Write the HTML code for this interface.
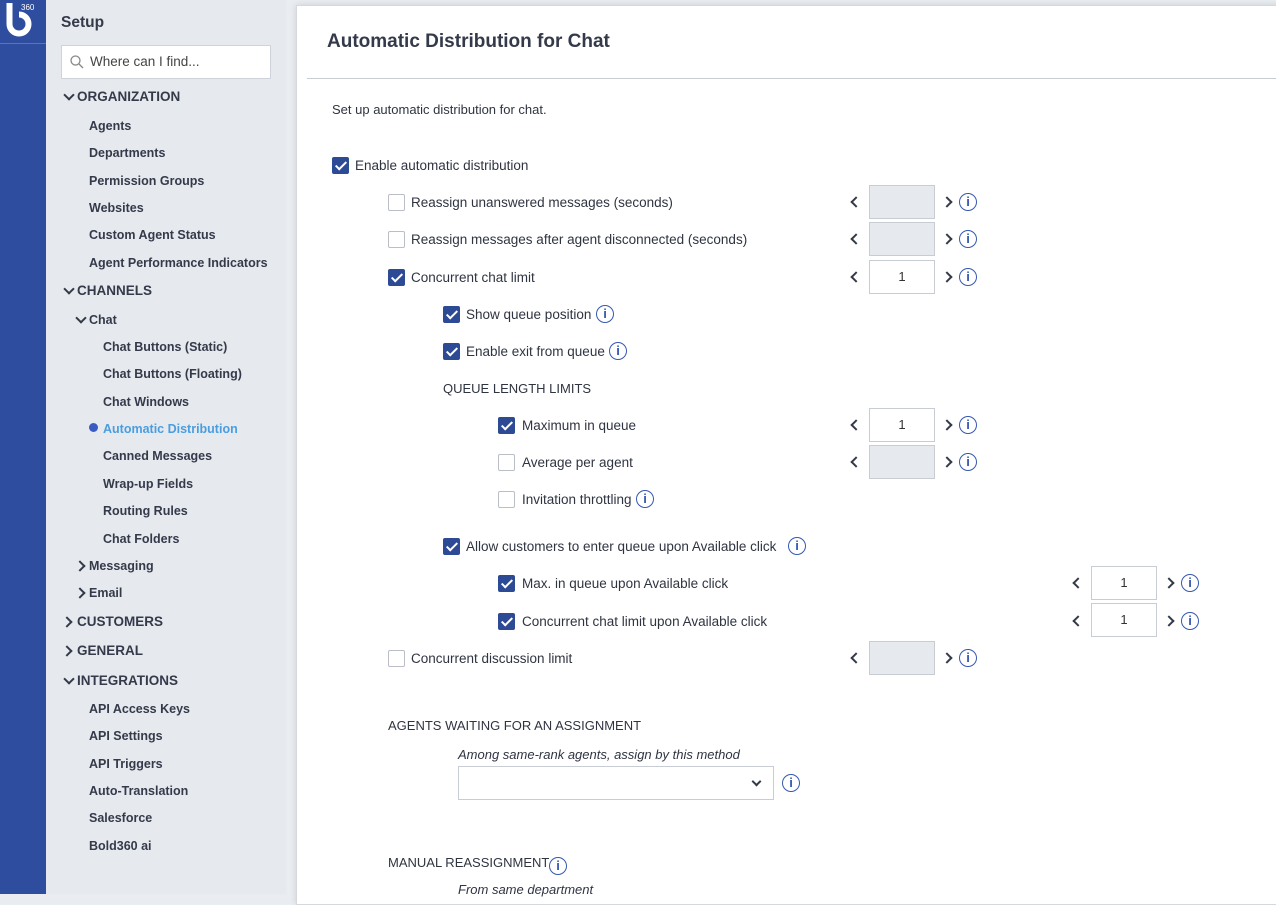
<!DOCTYPE html>
<html><head><meta charset="utf-8"><style>
*{box-sizing:border-box;margin:0;padding:0}
body{width:1276px;height:894px;overflow:hidden;background:#e9ecf0;font-family:"Liberation Sans",sans-serif;color:#333a48;position:relative}
.a{position:absolute;white-space:nowrap}
#rail{left:0;top:0;width:46px;height:894px;background:#2f4d9e}
#nav{left:46px;top:0;width:240px;height:894px;background:#e6e9ee}
.n{position:absolute;font-size:12.5px;font-weight:bold;color:#343a4a;white-space:nowrap;line-height:16px;margin-top:1px}
.h{font-size:13.5px}
#main{left:296px;top:5px;width:990px;height:900px;background:#fff;border:1px solid #d5d8dd;box-shadow:0 0 6px rgba(0,0,0,.12)}
.t{position:absolute;font-size:13.5px;color:#2f3441;white-space:nowrap;line-height:16px;margin-top:1px}
.cb{position:absolute;width:17px;height:17px;border:1px solid #b9bec7;border-radius:2px;background:#fff}
.cb.on{background:#2d4a94;border-color:#2d4a94}
.cb.on::after{content:"";position:absolute;left:5px;top:1px;width:4px;height:9px;border:solid #fff;border-width:0 2px 2px 0;transform:rotate(45deg)}
.i{position:absolute;width:18px;height:18px;border:1.6px solid #3558b0;border-radius:50%;color:#3558b0;font:bold 13px "Liberation Sans",sans-serif;text-align:center;line-height:15px}
.box{position:absolute;width:66px;height:34px;border:1px solid #c8ccd3;background:#e6e9ee;font-size:13px;text-align:center;line-height:32px;color:#333}
.box.w{background:#fff}
.ch{position:absolute;width:8px;height:8px;border:solid #333a48;border-width:2px 2px 0 0}
</style></head><body>
<div id="rail" class="a">
<svg class="a" style="left:0;top:0" width="46" height="46"><path d="M9.5 3 V24 A9.5 9.5 0 1 0 19 14.5 " fill="none" stroke="#fff" stroke-width="6"/><text x="21" y="10" fill="#fff" font-size="8" font-family="Liberation Sans">360</text></svg>
<div class="a" style="left:0;top:43px;width:46px;height:1px;background:#5a74b8"></div>
</div>
<div id="nav" class="a">
<div class="a" style="left:15px;top:14px;font-size:15.5px;font-weight:bold;color:#343a4a">Setup</div>
<div class="a" style="left:15px;top:45px;width:210px;height:34px;background:#fff;border:1px solid #cfd3d9"><svg class="a" style="left:8px;top:9px" width="14" height="14"><circle cx="5.5" cy="5.5" r="4.5" fill="none" stroke="#888" stroke-width="1.3"/><path d="M9 9 L13 13" stroke="#888" stroke-width="1.3"/></svg><span class="a" style="left:28px;top:8px;font-size:13.5px;color:#444">Where can I find...</span></div>
</div>
<div class="n h" style="left:77px;top:88px">ORGANIZATION</div>
<div class="n" style="left:89px;top:117px">Agents</div>
<div class="n" style="left:89px;top:144px">Departments</div>
<div class="n" style="left:89px;top:172px">Permission Groups</div>
<div class="n" style="left:89px;top:199px">Websites</div>
<div class="n" style="left:89px;top:226px">Custom Agent Status</div>
<div class="n" style="left:89px;top:254px">Agent Performance Indicators</div>
<div class="n h" style="left:77px;top:282px">CHANNELS</div>
<div class="n" style="left:89px;top:311px">Chat</div>
<div class="n" style="left:103px;top:338px">Chat Buttons (Static)</div>
<div class="n" style="left:103px;top:365px">Chat Buttons (Floating)</div>
<div class="n" style="left:103px;top:393px">Chat Windows</div>
<div class="a" style="left:89px;top:423px;width:9px;height:9px;border-radius:50%;background:#3a5cc2"></div>
<div class="n" style="left:103px;top:420px;color:#4a9ee0">Automatic Distribution</div>
<div class="n" style="left:103px;top:447px">Canned Messages</div>
<div class="n" style="left:103px;top:475px">Wrap-up Fields</div>
<div class="n" style="left:103px;top:502px">Routing Rules</div>
<div class="n" style="left:103px;top:530px">Chat Folders</div>
<div class="n" style="left:89px;top:557px">Messaging</div>
<div class="n" style="left:89px;top:584px">Email</div>
<div class="n h" style="left:77px;top:613px">CUSTOMERS</div>
<div class="n h" style="left:77px;top:642px">GENERAL</div>
<div class="n h" style="left:77px;top:672px">INTEGRATIONS</div>
<div class="n" style="left:89px;top:700px">API Access Keys</div>
<div class="n" style="left:89px;top:727px">API Settings</div>
<div class="n" style="left:89px;top:755px">API Triggers</div>
<div class="n" style="left:89px;top:782px">Auto-Translation</div>
<div class="n" style="left:89px;top:809px">Salesforce</div>
<div class="n" style="left:89px;top:837px">Bold360 ai</div>
<div class="ch" style="left:65px;top:91px;transform:rotate(135deg)"></div>
<div class="ch" style="left:65px;top:285px;transform:rotate(135deg)"></div>
<div class="ch" style="left:77px;top:314px;transform:rotate(135deg)"></div>
<div class="ch" style="left:76px;top:562px;transform:rotate(45deg)"></div>
<div class="ch" style="left:76px;top:589px;transform:rotate(45deg)"></div>
<div class="ch" style="left:63px;top:618px;transform:rotate(45deg)"></div>
<div class="ch" style="left:63px;top:647px;transform:rotate(45deg)"></div>
<div class="ch" style="left:65px;top:675px;transform:rotate(135deg)"></div>

<div id="main" class="a"></div>
<div class="a" style="left:327px;top:31px;font-size:19px;font-weight:bold;color:#343a4a">Automatic Distribution for Chat</div>
<div class="a" style="left:307px;top:78px;width:969px;height:1px;background:#c9ccd1"></div>
<div class="t" style="left:332px;top:101px;font-size:13px">Set up automatic distribution for chat.</div>

<div class="cb on" style="left:332px;top:157px"></div><div class="t" style="left:355px;top:157px">Enable automatic distribution</div>

<div class="cb" style="left:388px;top:194px"></div><div class="t" style="left:411px;top:194px">Reassign unanswered messages (seconds)</div>
<div class="cb" style="left:388px;top:231px"></div><div class="t" style="left:411px;top:231px">Reassign messages after agent disconnected (seconds)</div>
<div class="cb on" style="left:388px;top:269px"></div><div class="t" style="left:411px;top:269px">Concurrent chat limit</div>
<div class="cb on" style="left:443px;top:306px"></div><div class="t" style="left:466px;top:306px">Show queue position</div><div class="i" style="left:596px;top:305px">i</div>
<div class="cb on" style="left:443px;top:343px"></div><div class="t" style="left:466px;top:343px">Enable exit from queue</div><div class="i" style="left:609px;top:342px">i</div>
<div class="t" style="left:443px;top:380px;font-size:13px">QUEUE LENGTH LIMITS</div>
<div class="cb on" style="left:498px;top:417px"></div><div class="t" style="left:522px;top:417px">Maximum in queue</div>
<div class="cb" style="left:498px;top:454px"></div><div class="t" style="left:522px;top:454px">Average per agent</div>
<div class="cb" style="left:498px;top:491px"></div><div class="t" style="left:522px;top:491px">Invitation throttling</div><div class="i" style="left:636px;top:490px">i</div>
<div class="cb on" style="left:443px;top:538px"></div><div class="t" style="left:466px;top:538px">Allow customers to enter queue upon Available click</div><div class="i" style="left:788px;top:537px">i</div>
<div class="cb on" style="left:498px;top:575px"></div><div class="t" style="left:522px;top:575px">Max. in queue upon Available click</div>
<div class="cb on" style="left:498px;top:613px"></div><div class="t" style="left:522px;top:613px">Concurrent chat limit upon Available click</div>
<div class="cb" style="left:388px;top:650px"></div><div class="t" style="left:411px;top:650px">Concurrent discussion limit</div>

<div class="ch" style="left:852px;top:198px;transform:rotate(-135deg)"></div><div class="box" style="left:869px;top:185px"></div><div class="ch" style="left:943px;top:198px;transform:rotate(45deg)"></div><div class="i" style="left:959px;top:193px">i</div>
<div class="ch" style="left:852px;top:235px;transform:rotate(-135deg)"></div><div class="box" style="left:869px;top:222px"></div><div class="ch" style="left:943px;top:235px;transform:rotate(45deg)"></div><div class="i" style="left:959px;top:230px">i</div>
<div class="ch" style="left:852px;top:273px;transform:rotate(-135deg)"></div><div class="box w" style="left:869px;top:260px">1</div><div class="ch" style="left:943px;top:273px;transform:rotate(45deg)"></div><div class="i" style="left:959px;top:268px">i</div>
<div class="ch" style="left:852px;top:421px;transform:rotate(-135deg)"></div><div class="box w" style="left:869px;top:408px">1</div><div class="ch" style="left:943px;top:421px;transform:rotate(45deg)"></div><div class="i" style="left:959px;top:416px">i</div>
<div class="ch" style="left:852px;top:458px;transform:rotate(-135deg)"></div><div class="box" style="left:869px;top:445px"></div><div class="ch" style="left:943px;top:458px;transform:rotate(45deg)"></div><div class="i" style="left:959px;top:453px">i</div>
<div class="ch" style="left:1074px;top:579px;transform:rotate(-135deg)"></div><div class="box w" style="left:1091px;top:566px">1</div><div class="ch" style="left:1165px;top:579px;transform:rotate(45deg)"></div><div class="i" style="left:1181px;top:574px">i</div>
<div class="ch" style="left:1074px;top:617px;transform:rotate(-135deg)"></div><div class="box w" style="left:1091px;top:603px">1</div><div class="ch" style="left:1165px;top:617px;transform:rotate(45deg)"></div><div class="i" style="left:1181px;top:612px">i</div>
<div class="ch" style="left:852px;top:654px;transform:rotate(-135deg)"></div><div class="box" style="left:869px;top:641px"></div><div class="ch" style="left:943px;top:654px;transform:rotate(45deg)"></div><div class="i" style="left:959px;top:649px">i</div>

<div class="t" style="left:388px;top:717px;font-size:13px">AGENTS WAITING FOR AN ASSIGNMENT</div>
<div class="t" style="left:458px;top:746px;font-size:13px;font-style:italic">Among same-rank agents, assign by this method</div>
<div class="a" style="left:458px;top:766px;width:316px;height:34px;border:1px solid #c8ccd3;background:#fff"></div>
<div class="ch" style="left:753px;top:778px;width:7px;height:7px;border-width:0 2px 2px 0;transform:rotate(45deg)"></div>
<div class="i" style="left:782px;top:774px">i</div>
<div class="t" style="left:388px;top:854px;font-size:13px">MANUAL REASSIGNMENT</div><div class="i" style="left:549px;top:857px">i</div>
<div class="t" style="left:458px;top:881px;font-size:13px;font-style:italic">From same department</div>
</body></html>
